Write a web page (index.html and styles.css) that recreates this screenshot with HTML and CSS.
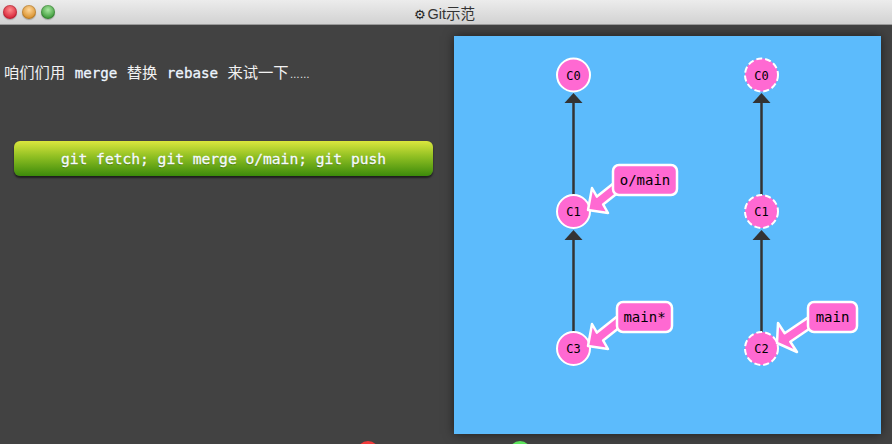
FILE: index.html
```html
<!DOCTYPE html>
<html lang="zh">
<head>
<meta charset="utf-8">
<title>Git示范</title>
<link rel="stylesheet" href="styles.css">
</head>
<body>
<div class="titlebar">
  <div class="lights">
    <span class="light red"></span>
    <span class="light yellow"></span>
    <span class="light green"></span>
  </div>
  <div class="title"><span class="gear">⚙</span>Git示范</div>
</div>
<div class="main">
  <div class="left">
    <p class="intro">咱们们用 <code>merge</code> 替换 <code>rebase</code> 来试一下<span class="ellipsis">……</span></p>
    <div class="cmd">git fetch; git merge o/main; git push</div>
  </div>
  <div class="panel">
    <svg class="graph" width="427" height="398" viewBox="0 0 427 398">
      <g class="edges">
        <line x1="119.5" y1="159" x2="119.5" y2="64"/>
        <polygon points="119.5,57 110.5,67 128.5,67"/>
        <line x1="119.5" y1="296" x2="119.5" y2="201"/>
        <polygon points="119.5,194 110.5,204 128.5,204"/>
        <line x1="307.5" y1="159" x2="307.5" y2="64"/>
        <polygon points="307.5,57 298.5,67 316.5,67"/>
        <line x1="307.5" y1="296" x2="307.5" y2="201"/>
        <polygon points="307.5,194 298.5,204 316.5,204"/>
      </g>
      <g class="node">
        <circle cx="119.5" cy="39" r="16.5"/><text x="119.5" y="43.5">C0</text>
        <circle cx="119.5" cy="175.5" r="16.5"/><text x="119.5" y="180">C1</text>
        <circle cx="119.5" cy="312.5" r="16.5"/><text x="119.5" y="317">C3</text>
      </g>
      <g class="node remote">
        <circle cx="307.5" cy="39" r="16.5"/><text x="307.5" y="43.5">C0</text>
        <circle cx="307.5" cy="175.5" r="16.5"/><text x="307.5" y="180">C1</text>
        <circle cx="307.5" cy="312.5" r="16.5"/><text x="307.5" y="317">C2</text>
      </g>
      <g class="ref">
        <polygon points="134,174 138,152 142.9,160.6 162.4,145.1 168.6,152.9 149.1,168.4 154,177"/>
        <rect x="159" y="129" width="64" height="30" rx="6"/>
        <text x="191" y="149">o/main</text>
      </g>
      <g class="ref">
        <polygon points="134,310 138,288 142.9,296.6 162.4,281.1 168.6,288.9 149.1,304.4 154,313"/>
        <rect x="163" y="266" width="55" height="30" rx="6"/>
        <text x="190.5" y="286">main*</text>
      </g>
      <g class="ref">
        <polygon points="323,307 324,287 330.7,297.3 353.9,281.6 359.5,290 336.3,305.7 343,316"/>
        <rect x="354" y="266" width="49" height="30" rx="6"/>
        <text x="378.5" y="286">main</text>
      </g>
    </svg>
  </div>
</div>
<div class="footer">
  <span class="dot dot-red"></span>
  <span class="dot dot-green"></span>
</div>
</body>
</html>
```
FILE: styles.css
```css
html, body {
  margin: 0;
  padding: 0;
}
body {
  width: 892px;
  height: 444px;
  overflow: hidden;
  background: #424242;
  font-family: "Noto Sans CJK SC", "DejaVu Sans", sans-serif;
}
.titlebar {
  height: 24px;
  border-bottom: 1px solid #9a9a9a;
  background: linear-gradient(#ececec, #d2d2d2);
  display: flex;
  align-items: center;
}
.lights {
  display: flex;
  gap: 5px;
  margin-left: 3px;
}
.light {
  width: 14px;
  height: 14px;
  border-radius: 50%;
  box-shadow: 0 1px 1px rgba(0,0,0,0.25), inset 0 0 0 1px rgba(0,0,0,0.15);
}
.red { background: radial-gradient(circle at 50% 35%, #ff8c8c, #d8263a 70%); }
.yellow { background: radial-gradient(circle at 50% 35%, #ffd79a, #d9922f 70%); }
.green { background: radial-gradient(circle at 50% 35%, #a8e8a0, #3f9b3c 70%); }
.title {
  flex: 1;
  text-align: center;
  margin-right: 58px;
  font-family: "Liberation Sans", "Noto Sans CJK SC", sans-serif;
  font-size: 14.5px;
  color: #333;
}
.gear {
  font-family: "DejaVu Sans", sans-serif;
  font-size: 13px;
  font-weight: bold;
  color: #222;
  margin-right: 2px;
}
.main {
  display: flex;
  padding-top: 11px;
}
.left {
  width: 454px;
  flex: none;
}
.intro {
  margin: 25px 0 0 4px;
  height: 20px;
  line-height: 20px;
  font-size: 15.3px;
  color: #f2f2f2;
  white-space: nowrap;
}
.intro code {
  font-family: "DejaVu Sans Mono", monospace;
  font-size: 14.2px;
  line-height: 1;
  color: #eef6ff;
  margin: 0 6px;
  -webkit-text-stroke: 0.3px #eef6ff;
}
.ellipsis {
  font-family: "Liberation Sans", sans-serif;
  font-size: 10px;
  line-height: 1;
  margin-left: 1px;
}
.cmd {
  margin: 60px 0 0 14px;
  width: 419px;
  height: 35px;
  border-radius: 6px;
  background: linear-gradient(#dbe63e, #8fbf22 45%, #3c8a0b);
  box-shadow: 0 2px 2px rgba(0,0,0,0.55);
  display: flex;
  align-items: center;
  justify-content: center;
  font-family: "DejaVu Sans Mono", monospace;
  font-size: 14.6px;
  color: #f6fbff;
  -webkit-text-stroke: 0.3px #f6fbff;
  text-shadow: 0 1px 1px rgba(0,0,0,0.3);
}
.panel {
  width: 427px;
  height: 398px;
  background: #5cbbfc;
  box-shadow: 0 0 10px rgba(0,0,0,0.55);
  flex: none;
}
.graph {
  display: block;
}
.edges line {
  stroke: #333;
  stroke-width: 2.5;
}
.edges polygon {
  fill: #333;
}
.node circle {
  fill: #ff69d2;
  stroke: #fff;
  stroke-width: 2;
}
.node.remote circle {
  stroke-dasharray: 6 3;
}
.node text {
  font-family: "DejaVu Sans Mono", monospace;
  font-size: 12px;
  fill: #000;
  text-anchor: middle;
}
.ref polygon,
.ref rect {
  fill: #ff69d2;
  stroke: #fff;
  stroke-width: 2.5;
  stroke-linejoin: round;
}
.ref text {
  font-family: "DejaVu Sans Mono", monospace;
  font-size: 14px;
  fill: #000;
  text-anchor: middle;
}
.footer {
  display: flex;
  gap: 130px;
  padding: 7px 0 0 357px;
}
.dot {
  width: 22px;
  height: 22px;
  border-radius: 50%;
}
.dot-red { background: #f23a3a; }
.dot-green { background: #5be45b; }
```
